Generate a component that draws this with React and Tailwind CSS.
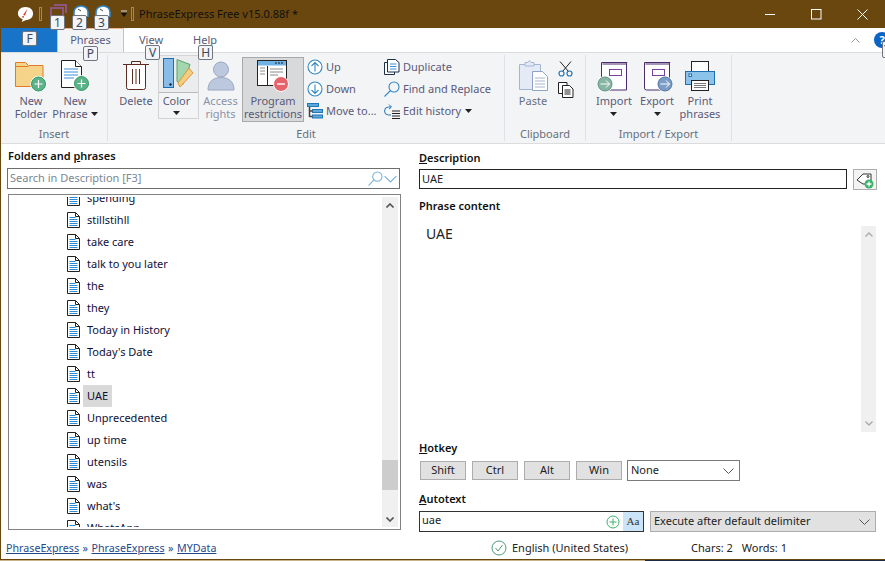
import React from "react";

const Tip = ({ c, className }) => (
  <span className={"absolute z-10 flex h-[15px] w-[15px] items-center justify-center rounded-[2px] border border-[#6f7680] bg-[#f2f4f8] text-[12px] text-[#3b4a5a] " + className}>{c}</span>
);

const Caret = ({ className = "" }) => (
  <svg width="7" height="4" viewBox="0 0 7 4" className={className}><path d="M0 0h7L3.500 4z" fill="#222" /></svg>
);

const PlusBadge = ({ x, y, r = 7, fill = "#5cb38a" }) => (
  <g>
    <circle cx={x} cy={y} r={r + 1.2} fill="#fff" />
    <circle cx={x} cy={y} r={r} fill={fill} stroke="#2f9a62" />
    <path d={`M${x - 4} ${y}h8M${x} ${y - 4}v8`} stroke="#fff" strokeWidth="1.2" />
  </g>
);

const FolderIcon = () => (
  <svg width="34" height="34" viewBox="0 0 34 34">
    <path d="M1.500 3.500h10l3 3h14.500v21h-27.500z" fill="#f5d389" stroke="#e07b2a" />
    <path d="M1.500 7.500h13" stroke="#e07b2a" fill="none" />
    <PlusBadge x={24.500} y={25} />
  </svg>
);
const PhraseIcon = () => (
  <svg width="34" height="34" viewBox="0 0 34 34">
    <path d="M3.500 1.500h14l6 6v21h-20z" fill="#fff" stroke="#222" />
    <path d="M17.500 1.500v6h6" fill="#fff" stroke="#222" />
    <path d="M6 10h14M6 13h14M6 16h14M6 19h10" stroke="#3b8fd6" />
    <PlusBadge x={23.500} y={24.500} />
  </svg>
);
const TrashIcon = () => (
  <svg width="28" height="34" viewBox="0 0 28 34">
    <path d="M1 5.500h26M9.500 5v-2.500h9v3" stroke="#5c2a1e" fill="none" />
    <path d="M4.500 6v22.500a2 2 0 0 0 2 2h15a2 2 0 0 0 2-2v-22.500" fill="#fff" stroke="#5c2a1e" />
    <path d="M10.500 10v15M14 10v15M17.500 10v15" stroke="#5c2a1e" />
  </svg>
);
const ColorIcon = () => (
  <svg width="31" height="32" viewBox="0 0 31 32">
    <path d="M14 1.500l13 5-7 20-6-3z" fill="#a3d6ad" stroke="#5aa36c" />
    <path d="M15 25L26 10l4 5-13 14z" fill="#f6cc80" stroke="#d79a3b" />
    <rect x="0.500" y="0.500" width="10" height="29" fill="#87bde8" stroke="#1f6fb0" />
    <circle cx="7.500" cy="26.500" r="1.200" fill="#123" />
  </svg>
);
const PersonIcon = () => (
  <svg width="28" height="32" viewBox="0 0 28 32">
    <circle cx="14" cy="9.500" r="7.500" fill="#bcc8dd" stroke="#9aa8c2" />
    <path d="M1 30c0-8 5-12.500 13-12.500s13 4.500 13 12.500z" fill="#bcc8dd" stroke="#9aa8c2" />
  </svg>
);
const RestrictIcon = () => (
  <svg width="34" height="34" viewBox="0 0 34 34">
    <rect x="1.500" y="1.500" width="29" height="25" fill="#fff" stroke="#222" />
    <rect x="2" y="2" width="28" height="4.500" fill="#6fb2e3" />
    <path d="M19 4h2M22 4h2M25 4h2" stroke="#123" />
    <path d="M11.500 7v19" stroke="#222" />
    <path d="M4 9h5M4 12h5M4 15h5M14 10h13M14 13h13M14 16h8" stroke="#8a8a8a" />
    <circle cx="25" cy="25" r="7.500" fill="#e8626a" stroke="#fff" />
    <path d="M21 25h8" stroke="#fff" strokeWidth="1.400" />
  </svg>
);
const CircleArrow = ({ down }) => (
  <svg width="16" height="16" viewBox="0 0 16 16" fill="none" stroke="#3388c4" strokeWidth="1.100">
    <circle cx="8" cy="8" r="7" fill="#fff" />
    {down ? <path d="M8 3.500v9M4.500 9l3.500 3.500 3.500-3.500" /> : <path d="M8 12.500v-9M4.500 7l3.500-3.500 3.500 3.500" />}
  </svg>
);
const MoveIcon = () => (
  <svg width="16" height="16" viewBox="0 0 16 16">
    <rect x="0.500" y="0.500" width="11" height="3" fill="#59a7dc" stroke="#2377b5" />
    <rect x="5.500" y="6.500" width="10" height="3" fill="#59a7dc" stroke="#2377b5" />
    <rect x="5.500" y="12" width="10" height="3" fill="#59a7dc" stroke="#2377b5" />
    <path d="M2.500 4v10M2.500 8h3M2.500 13.500h3" stroke="#444" strokeWidth="1.500" fill="none" />
  </svg>
);
const DupIcon = () => (
  <svg width="16" height="16" viewBox="0 0 16 16" fill="none">
    <path d="M4 3.500H.5v12h10V13" stroke="#1c2e4a" fill="#fff" />
    <path d="M3.500.5h8l3.500 3v9.500H3.500z" stroke="#1c2e4a" fill="#fff" />
    <path d="M6 5h6.500M6 7.500h6.500M6 10h6.500" stroke="#3b8fd6" />
  </svg>
);
const SearchIcon = ({ size = 16, color = "#3388c4" }) => (
  <svg width={size} height={size} viewBox="0 0 16 16" fill="none" stroke={color} strokeWidth="1.100">
    <circle cx="10" cy="6" r="5" />
    <path d="M6.500 9.500L.5 15.500" />
  </svg>
);
const HistoryIcon = () => (
  <svg width="17" height="16" viewBox="0 0 17 16" fill="none">
    <path d="M5 1.500l2.500 2.500L5 6" stroke="#2377b5" />
    <path d="M7 4H4.500a3.500 3.500 0 0 0 0 8H7" stroke="#2377b5" />
    <path d="M8 8h8M8 10.500h8M8 13h8M8 15.500h8" stroke="#222" />
  </svg>
);
const PasteIcon = () => (
  <svg width="31" height="32" viewBox="0 0 31 32">
    <path d="M1.500 4.500h21v25h-21z" fill="#e4ebf6" stroke="#a5b6d2" />
    <path d="M7 4.500V2.500h3l1.500-2 1.500 2h3v3.500H7z" fill="#e4ebf6" stroke="#a5b6d2" />
    <path d="M14.500 11.500h10l5 5v14h-15z" fill="#fff" stroke="#8ea3c5" />
    <path d="M17 18h10M17 21h10M17 24h10M17 27h10" stroke="#a5b6d2" />
  </svg>
);
const ScissorIcon = () => (
  <svg width="15" height="16" viewBox="0 0 15 16" fill="none">
    <path d="M2 .5l8.500 10M13 .5L4.500 10.500" stroke="#222" />
    <circle cx="3.500" cy="12.500" r="2.500" stroke="#2377b5" strokeWidth="1.200" />
    <circle cx="11.500" cy="12.500" r="2.500" stroke="#2377b5" strokeWidth="1.200" />
  </svg>
);
const CopyIcon = () => (
  <svg width="16" height="16" viewBox="0 0 16 16" fill="none" stroke="#222">
    <path d="M9 3.500V.5H.5v11h4" fill="#fff" />
    <path d="M4.500 3.500h7l3.500 3.500v8.500H4.500z" fill="#fff" />
    <path d="M6.500 8h6M6.500 10h6M6.500 12h6" />
  </svg>
);
const BookIcon = ({ arrowLeft, fill, stroke }) => {
  const cx = arrowLeft ? 8 : 25;
  return (
    <svg width="34" height="33" viewBox="0 0 34 33">
      <path d="M5.500 4h24v26h-23a2 2 0 0 1-2-2V2.500h25.500l-1 1.500" fill="#fff" stroke="#4b2d6b" />
      <rect x="12.500" y="9.500" width="12" height="6" fill="#fff" stroke="#7b3fa0" />
      <circle cx={cx} cy="24" r="8" fill="#fff" />
      <circle cx={cx} cy="24" r="7" fill={fill} stroke={stroke} />
      <path d={`M${cx - 4.500} 24h9M${cx + 1} 20.500l3.500 3.500-3.500 3.500`} fill="none" stroke="#fff" />
    </svg>
  );
};
const PrinterIcon = () => (
  <svg width="32" height="32" viewBox="0 0 32 32">
    <rect x="7.500" y="1.500" width="17" height="11" fill="#fff" stroke="#222" />
    <rect x="1.500" y="11.500" width="29" height="13" fill="#8cc3ea" stroke="#1f6fb0" />
    <rect x="5" y="14" width="2.500" height="2.500" fill="#fff" stroke="#1f6fb0" />
    <rect x="7.500" y="20.500" width="17" height="10" fill="#fff" stroke="#222" />
    <path d="M10 23.500h12M10 25.500h12M10 27.500h12" stroke="#777" />
  </svg>
);
const DocIcon = () => (
  <svg width="13" height="16" viewBox="0 0 13 16" fill="none" className="shrink-0">
    <path d="M.5.500h8l4 4v11H.5z" fill="#fff" stroke="#222" />
    <path d="M8.500.5v4h4" stroke="#222" />
    <path d="M2.500 5.500h6M2.500 7.500h8M2.500 9.500h8M2.500 11.500h8M2.500 13.500h8" stroke="#2b8ad6" />
  </svg>
);
const QatDome = ({ className = "" }) => (
  <svg width="16" height="12" viewBox="0 0 16 12" className={className}>
    <path d="M1 12V7a7 6 0 0 1 14 0v5z" fill="#fff" stroke="#2f86c9" strokeWidth="1.600" />
    <path d="M8 6L5 4" stroke="#444" />
  </svg>
);

const BigBtn = ({ icon, label, label2, caret, h = 34, className = "", labelClass = "" }) => (
  <div className={"flex h-[74px] flex-col items-center pt-[4px] leading-[13px] " + className}>
    <div className="flex items-center justify-center" style={{ height: h }}>{icon}</div>
    <div className={"mt-[1px] flex flex-col items-center " + labelClass}>
      <span>{label}</span>
      {label2 && (
        <span className="flex items-center gap-[3px]">
          {label2}
          {caret && <Caret />}
        </span>
      )}
      {!label2 && caret && <Caret className="mt-[5px]" />}
    </div>
  </div>
);

const SmallBtn = ({ icon, label, caret }) => (
  <div className="flex h-[22px] items-center gap-[2px]">
    <span className="flex w-[18px] shrink-0 justify-center">{icon}</span>
    <span>{label}</span>
    {caret && <Caret className="ml-[2px]" />}
  </div>
);

const Group = ({ title, width, children }) => (
  <div className="mt-[2px] flex h-[86px] shrink-0 flex-col border-r border-[#dfe1e4]" style={{ width }}>
    <div className="flex h-[71px] flex-1">{children}</div>
    <div className="h-[15px] text-center leading-[15px] text-[#66707c]">{title}</div>
  </div>
);

const rows = ["stillstihll", "take care", "talk to you later", "the", "they", "Today in History", "Today's Date", "tt", "UAE", "Unprecedented", "up time", "utensils", "was", "what's"];

const Row = ({ t, sel }) => (
  <div className="flex h-[22px] items-center pl-[56px]">
    <DocIcon />
    <span className={"ml-[3px] flex h-[22px] items-center px-[4px] text-[#10103a] " + (sel ? "bg-[#d9d9d9]" : "")}>{t}</span>
  </div>
);

const Key = ({ t, className = "" }) => (
  <div className={"flex h-[19px] w-[46px] items-center justify-center border border-[#adadad] bg-[#e1e1e1] text-[#222] " + className}>{t}</div>
);

const Chevron = ({ className = "", color = "#555" }) => (
  <svg width="11" height="6" viewBox="0 0 11 6" fill="none" stroke={color} className={className}><path d="M.5.5l5 5 5-5" /></svg>
);

export default function App() {
  return (
    <div className="flex h-[561px] w-[885px] flex-col overflow-hidden bg-white text-[11px] text-[#222]" style={{ fontFamily: '"Noto Sans", "Liberation Sans", sans-serif' }}>
      <div className="flex min-h-0 flex-1 flex-col border-b border-l border-[#69470f]">
      {/* Title bar */}
      <div className="flex h-[28px] shrink-0 items-center bg-[#69470f]">
        <svg width="17" height="17" viewBox="0 0 18 18" className="ml-[16px]">
          <path d="M9 1c5 0 8 3 8 7s-3 7-8 7l-4 2 1-3C3 13 1 11 1 8c0-4 3-7 8-7z" fill="#fff" />
          <path d="M11 3L8.500 10 6.500 9.500z" fill="#e0342a" />
          <circle cx="6.500" cy="11.500" r="1" fill="#e0342a" />
        </svg>
        <span className="ml-[5px] h-[14px] w-[3px] border border-[#a08a60]" />
        <div className="relative ml-[8px] flex h-[28px] w-[80px] items-start">
          <svg width="17" height="13" viewBox="0 0 17 13" className="mt-[4px]"><path d="M4 1h12v8M1 4h12v9H1z" fill="none" stroke="#9a5aa8" strokeWidth="1.500" /></svg>
          <QatDome className="ml-[6px] mt-[5px]" />
          <QatDome className="ml-[6px] mt-[5px]" />
          <Tip c="1" className="left-0 top-[15px]" />
          <Tip c="2" className="left-[22px] top-[15px]" />
          <Tip c="3" className="left-[44px] top-[15px]" />
          <svg width="8" height="8" viewBox="0 0 8 8" className="ml-[9px] mt-[10px]"><path d="M1 1h6" stroke="#ddd" /><path d="M1 3h6L4 7z" fill="#111" /></svg>
        </div>
        <span className="ml-px h-[14px] w-[3px] border border-[#a08a60]" />
        <span className="ml-[5px] text-[11px] text-[#111]">PhraseExpress Free v15.0.88f *</span>
        <div className="ml-auto flex items-center">
          <svg width="11" height="11" viewBox="0 0 11 11" className="mr-[35px]"><path d="M0 5.500h10" stroke="#fff" /></svg>
          <svg width="11" height="11" viewBox="0 0 11 11" className="mr-[35px]"><rect x=".5" y=".5" width="9.500" height="9.500" fill="none" stroke="#fff" /></svg>
          <svg width="11" height="11" viewBox="0 0 11 11" className="mr-[17px]"><path d="M.5.5l10 10M10.500.5l-10 10" stroke="#fff" /></svg>
        </div>
      </div>

      {/* Tabs */}
      <div className="relative flex h-[24px] shrink-0 bg-white">
        <div className="relative flex w-[56px] items-center justify-center bg-[#1874c9]">
          <Tip c="F" className="left-[21px] top-[3px]" />
        </div>
        <div className="relative flex h-[24px] w-[67px] items-center justify-center border-x border-t border-[#f0b48f] bg-[#f3f4f6] text-[#5a5a78]">
          Phrases
          <Tip c="P" className="left-[25px] top-[17px]" />
        </div>
        <div className="relative ml-[15px] flex items-center text-[#5a5a78]">
          View
          <Tip c="V" className="left-[6px] top-[17px]" />
        </div>
        <div className="relative ml-[30px] flex items-center text-[#5a5a78]">
          Help
          <Tip c="H" className="left-[5px] top-[17px]" />
        </div>
        <div className="ml-auto flex items-center">
          <svg width="9" height="5" viewBox="0 0 9 5" fill="none" stroke="#999" className="mr-[14px]"><path d="M.5 4.500l4-4 4 4" /></svg>
          <div className="relative mr-[-5px] flex h-[16px] w-[16px] items-center justify-center rounded-full bg-[#0b63c5] text-[11px] font-bold text-white">?
            <span className="absolute left-[8px] top-[9px] flex h-[17px] w-[16px] items-center rounded-[2px] border border-[#6f7680] bg-[#f2f4f8] pl-[1px] text-[12px] font-normal text-[#3b4a5a]">Y</span>
          </div>
        </div>
      </div>

      {/* Ribbon */}
      <div className="flex h-[92px] shrink-0 border-y border-[#dcdcdc] bg-[#f3f4f6] text-[#5a5a78]">
        <Group title="Insert" width={107}>
          <BigBtn icon={<FolderIcon />} label="New" label2="Folder" className="ml-[12px] w-[36px]" />
          <BigBtn icon={<PhraseIcon />} label="New" label2="Phrase" caret className="ml-[3px] w-[46px]" />
        </Group>
        <Group title="Edit" width={397}>
          <BigBtn icon={<TrashIcon />} label="Delete" className="ml-[8px] w-[40px]" />
          <div className="ml-[2px] flex h-[64px] w-[41px] flex-col items-center border border-[#d2d3d5] leading-[13px]">
            <div className="flex h-[36px] w-full items-center justify-center bg-[#ebecee]"><ColorIcon /></div>
            <div className="flex w-full flex-1 flex-col items-center border-t border-[#b9b9b9] pr-[4px] pt-[1px]">
              Color
              <Caret className="mt-[4px]" />
            </div>
          </div>
          <BigBtn icon={<PersonIcon />} label="Access" label2="rights" className="w-[43px] text-[#8a93a6]" />
          <div className="mt-[2px] h-[65px] w-[62px] border border-[#a9a9a9] bg-[#d8d9da]">
            <BigBtn icon={<RestrictIcon />} label="Program" label2="restrictions" className="!pt-[1px]" />
          </div>
          <div className="ml-[2px] flex w-[77px] flex-col pt-[1px]">
            <SmallBtn icon={<CircleArrow />} label="Up" />
            <SmallBtn icon={<CircleArrow down />} label="Down" />
            <SmallBtn icon={<MoveIcon />} label="Move to..." />
          </div>
          <div className="flex flex-col pt-[1px]">
            <SmallBtn icon={<DupIcon />} label="Duplicate" />
            <SmallBtn icon={<SearchIcon />} label="Find and Replace" />
            <SmallBtn icon={<HistoryIcon />} label="Edit history" caret />
          </div>
        </Group>
        <Group title="Clipboard" width={81}>
          <BigBtn icon={<PasteIcon />} label="Paste" className="ml-[12px] w-[32px] text-[#66707c]" />
          <div className="ml-[9px] flex flex-col gap-[5px] pt-[6px]">
            <ScissorIcon />
            <CopyIcon />
          </div>
        </Group>
        <Group title="Import / Export" width={146}>
          <BigBtn icon={<BookIcon arrowLeft fill="#87b5a3" stroke="#5b9480" />} label="Import" caret className="ml-[10px] w-[36px]" />
          <BigBtn icon={<BookIcon fill="#7b9cc4" stroke="#4e76a6" />} label="Export" caret className="ml-[7px] w-[36px]" />
          <BigBtn icon={<PrinterIcon />} label="Print" label2="phrases" className="ml-[4px] w-[42px]" />
        </Group>
      </div>

      {/* Main */}
      <div className="flex min-h-0 flex-1 pt-[5px]">
        <div className="ml-[6px] flex w-[394px] shrink-0 flex-col">
          <div className="h-[16px] pl-px font-semibold leading-[14px] text-[#111]">Folders and <u>p</u>hrases</div>
          <div className="mt-[3px] flex h-[21px] w-[393px] items-center border border-[#6d6d6d] pl-[2px] text-[#7b8794]">
            Search in Description [F3]
            <span className="ml-auto flex items-center gap-[1px] pr-[2px]">
              <SearchIcon color="#7ab0d6" size={15} />
              <Chevron color="#7ab0d6" className="h-[8px] w-[13px]" />
            </span>
          </div>
          <div className="relative ml-px mt-[5px] flex h-[336px] w-[393px] overflow-hidden border border-[#828282] p-[2px]">
            <div className="min-w-0 flex-1 overflow-hidden">
              <div className="mt-[-10px]">
                <Row t="spending" />
                {rows.map((t) => <Row key={t} t={t} sel={t === "UAE"} />)}
                <Row t="WhatsApp" />
              </div>
            </div>
            <div className="flex w-[16px] shrink-0 flex-col items-center bg-[#f0f0f0]">
              <svg width="8" height="5" viewBox="0 0 8 5" className="mt-[6px]" fill="none" stroke="#555" strokeWidth="1.600"><path d="M.5 4.500L4 1l3.500 3.500" /></svg>
              <div className="mt-[252px] h-[30px] w-full bg-[#cdcdcd]" />
              <svg width="8" height="5" viewBox="0 0 8 5" className="mt-[27px]" fill="none" stroke="#555" strokeWidth="1.600"><path d="M.5.5L4 4l3.500-3.500" /></svg>
            </div>
          </div>
          <div className="-ml-px mt-[10px] flex gap-[3.500px] text-[10.700px] text-[#1f4a8a]">
            <u>PhraseExpress</u><span>»</span><u>PhraseExpress</u><span>»</span><u>MYData</u>
          </div>
        </div>

        <div className="ml-[18px] flex w-[458px] shrink-0 flex-col">
          <div className="h-[16px] pt-[2px] font-semibold leading-[14px] text-[#111]"><u>D</u>escription</div>
          <div className="mt-[4px] flex">
            <div className="flex h-[20px] w-[428px] items-center border border-[#222] pl-[2px]">UAE</div>
            <div className="ml-[6px] flex h-[21px] w-[24px] items-center justify-center border border-[#adadad] bg-[#f3f3f3]">
              <svg width="18" height="18" viewBox="0 0 18 18" fill="none">
                <path d="M1 9l6-6h8v10H7z" stroke="#333" fill="#fff" />
                <circle cx="12" cy="5.500" r="1" stroke="#333" />
                <circle cx="13" cy="13" r="4.500" fill="#3db26b" />
                <path d="M10.500 13h5M13 10.500v5" stroke="#fff" strokeWidth="1.300" />
              </svg>
            </div>
          </div>
          <div className="mt-[9px] h-[16px] font-semibold leading-[14px] text-[#111]">Phrase content</div>
          <div className="flex h-[226px]">
            <div className="flex-1 pl-[7px] pt-[8px] text-[14px]">UAE</div>
            <div className="mr-[1px] mt-[11px] flex h-[206px] w-[15px] flex-col items-center justify-between bg-[#f0f0f0] py-[6px]">
              <svg width="8" height="5" viewBox="0 0 8 5" fill="none" stroke="#aaa" strokeWidth="1.400"><path d="M.5 4.500L4 1l3.500 3.500" /></svg>
              <svg width="8" height="5" viewBox="0 0 8 5" fill="none" stroke="#aaa" strokeWidth="1.400"><path d="M.5.5L4 4l3.500-3.500" /></svg>
            </div>
          </div>
          <div className="h-[19px] font-semibold leading-[14px] text-[#111]"><u>H</u>otkey</div>
          <div className="flex items-center pl-px">
            <Key t="Shift" />
            <Key t="Ctrl" className="ml-[6px]" />
            <Key t="Alt" className="ml-[6px]" />
            <Key t="Win" className="ml-[6px]" />
            <div className="ml-[5px] flex h-[21px] w-[113px] items-center justify-between border border-[#7a7a7a] pl-[3px] pr-[3px]">
              None
              <Chevron className="mr-[2px]" />
            </div>
          </div>
          <div className="mt-[11px] h-[19px] font-semibold leading-[14px] text-[#111]"><u>A</u>utotext</div>
          <div className="flex">
            <div className="flex h-[21px] w-[225px] items-center border border-[#333] pl-[2px]">
              <span className="mb-[2px]">uae</span>
              <svg width="14" height="14" viewBox="0 0 14 14" fill="none" stroke="#3db26b" className="ml-auto mr-[3px]"><circle cx="7" cy="7" r="6" /><path d="M3.500 7h7M7 3.500v7" /></svg>
              <span className="flex h-full w-[20px] items-center justify-center bg-[#cce4f7] text-[11px] text-[#333]" style={{ fontFamily: '"Liberation Serif", serif' }}>Aa</span>
            </div>
            <div className="ml-[6px] flex h-[21px] w-[226px] items-center justify-between border border-[#adadad] bg-[#e1e1e1] pl-[3px] pr-[3px]">
              Execute after default delimiter
              <Chevron className="mr-[2px]" />
            </div>
          </div>
          <div className="mt-[8px] flex items-center">
            <svg width="16" height="16" viewBox="0 0 16 16" fill="none" stroke="#4c9a78" className="ml-[72px]"><circle cx="8" cy="8" r="7" /><path d="M4.500 8l2.500 3 4.500-6" /></svg>
            <span className="ml-[5px]">English (United States)</span>
            <span className="ml-[63px]">Chars: 2</span>
            <span className="ml-[9px]">Words: 1</span>
          </div>
        </div>
      </div>
      </div>
      <div className="flex h-[1px] shrink-0">
        <div className="w-[645px] bg-[#c9b48a]" />
        <div className="flex-1 bg-[#1c2a44]" />
      </div>
    </div>
  );
}
